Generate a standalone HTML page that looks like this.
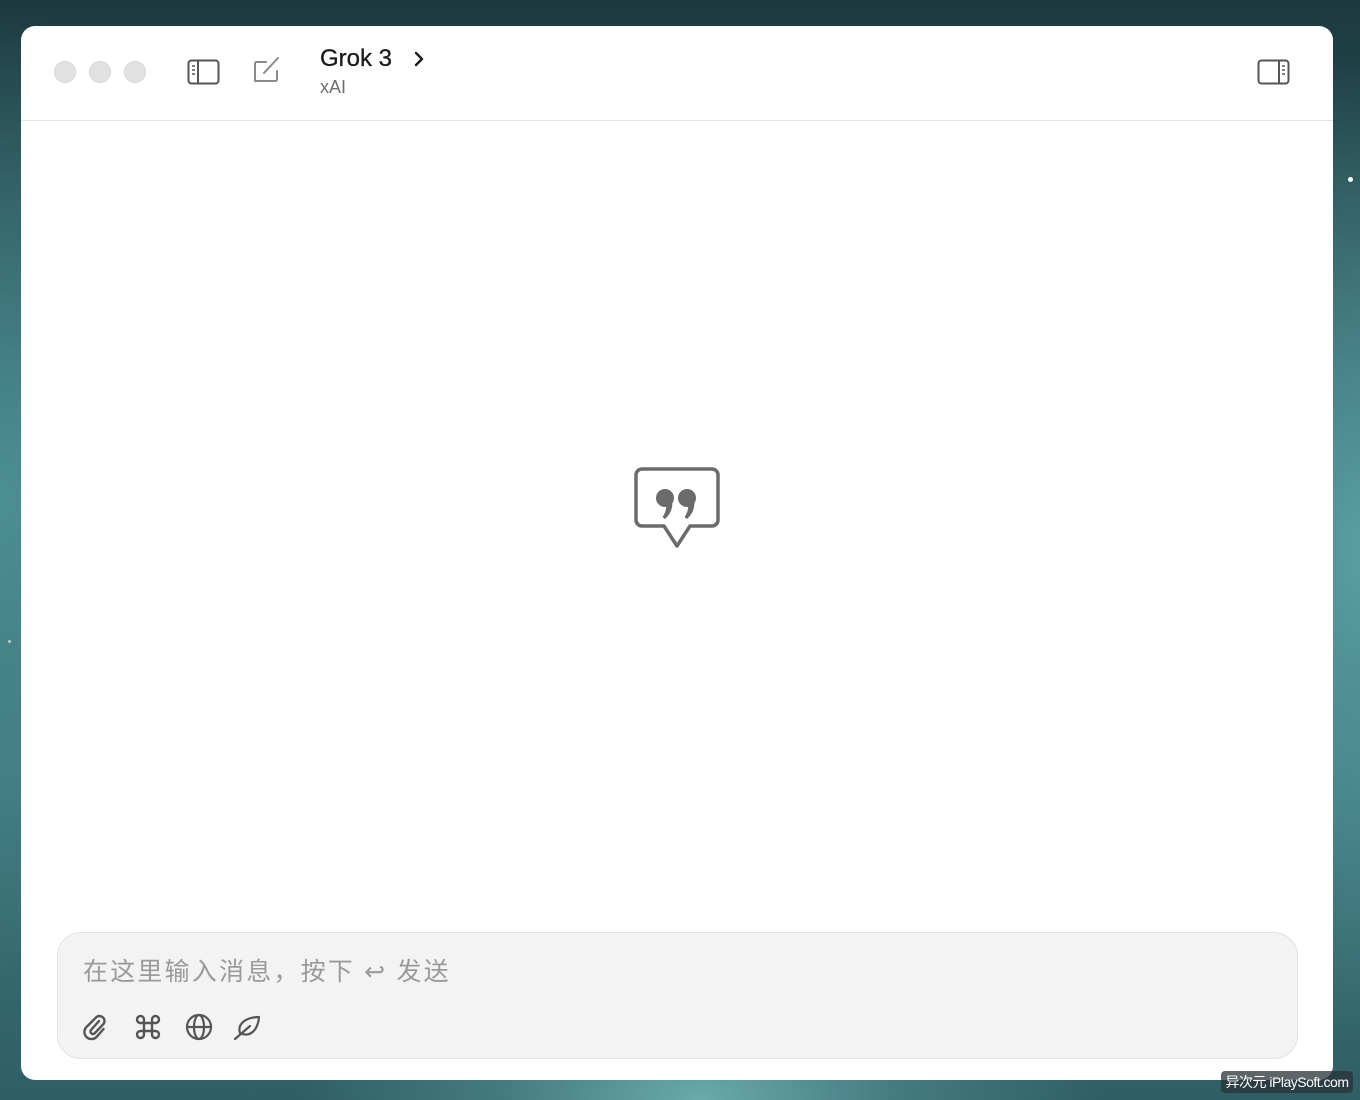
<!DOCTYPE html>
<html><head><meta charset="utf-8"><style>
*{margin:0;padding:0;box-sizing:border-box}
html,body{width:1360px;height:1100px;overflow:hidden}
body{background:
radial-gradient(ellipse 500px 300px at 700px 1100px,#6aa9ac 0%,rgba(80,140,145,0.6) 40%,transparent 80%),
radial-gradient(ellipse 400px 700px at 0px 500px,#4d8f95 0%,transparent 70%),
radial-gradient(ellipse 300px 700px at 1360px 550px,#5a9ea3 0%,transparent 70%),
linear-gradient(180deg,#1d3a40 0%,#2d5d63 40%,#3b7378 70%,#2f5f66 100%);
font-family:"Liberation Sans","Noto Sans CJK SC",sans-serif;position:relative}
.win{position:absolute;left:21px;top:26px;width:1312px;height:1054px;background:#fff;border-radius:14px;overflow:hidden}
.hdr{position:absolute;left:0;top:0;width:100%;height:95px;border-bottom:1.5px solid #e3e3e3}
.dot{position:absolute;top:35px;width:22px;height:22px;border-radius:50%;background:#e2e2e2;border:1px solid #d6d6d6}
.title{position:absolute;left:299px;top:19px;font-size:24px;font-weight:500;color:#1a1a1a;-webkit-text-stroke:0.3px #1a1a1a}
.sub{position:absolute;left:299px;top:51px;font-size:18px;color:#6e6e6e}
.inp{position:absolute;left:36px;top:906px;width:1241px;height:127px;background:#f3f3f3;border:1.5px solid #e2e2e2;border-radius:24px}
.ph{position:absolute;left:25px;top:19px;font-size:25px;color:#9a9a9a;letter-spacing:2.2px}
.wm{position:absolute;left:1221px;top:1071px;width:132px;height:22px;background:rgba(40,50,55,0.75);border-radius:4px;color:#fff;font-size:14px;line-height:22px;text-align:center;letter-spacing:-0.5px}
.star{position:absolute;width:5px;height:5px;border-radius:50%;background:#fff}
</style></head><body>
<div class="star" style="left:1348px;top:177px"></div>
<div class="star" style="left:8px;top:640px;width:3px;height:3px;opacity:.6"></div>
<div class="win">
<div class="hdr">
<div class="dot" style="left:33px"></div>
<div class="dot" style="left:68px"></div>
<div class="dot" style="left:103px"></div>
<svg style="position:absolute;left:166px;top:33px" width="34" height="26" viewBox="0 0 34 26" fill="none" stroke="#555" stroke-width="2"><rect x="1.5" y="1.5" width="30" height="23" rx="3"/><line x1="11" y1="2" x2="11" y2="24"/><line x1="5" y1="7" x2="8" y2="7" stroke-width="1.5"/><line x1="5" y1="11" x2="8" y2="11" stroke-width="1.5"/><line x1="5" y1="15" x2="8" y2="15" stroke-width="1.5"/></svg>
<svg style="position:absolute;left:231px;top:29px" width="30" height="30" viewBox="0 0 30 30" fill="none" stroke="#8a8a8a" stroke-width="2" stroke-linecap="round" stroke-linejoin="round"><path d="M14 7H4.5a1.5 1.5 0 0 0-1.5 1.5V26h20.5a1.5 1.5 0 0 0 1.5-1.5V16"/><path d="M12 18L26 3"/></svg>
<div class="title">Grok 3</div>
<svg style="position:absolute;left:391px;top:24px" width="14" height="18" viewBox="0 0 14 18" fill="none" stroke="#1a1a1a" stroke-width="2.4" stroke-linecap="round" stroke-linejoin="round"><path d="M4 3l6 6-6 6"/></svg>
<div class="sub">xAI</div>
<svg style="position:absolute;left:1236px;top:33px" width="34" height="26" viewBox="0 0 34 26" fill="none" stroke="#555" stroke-width="2"><rect x="1.5" y="1.5" width="30" height="23" rx="3"/><line x1="22" y1="2" x2="22" y2="24"/><line x1="25" y1="7" x2="28" y2="7" stroke-width="1.5"/><line x1="25" y1="11" x2="28" y2="11" stroke-width="1.5"/><line x1="25" y1="15" x2="28" y2="15" stroke-width="1.5"/></svg>
</div>
<svg style="position:absolute;left:613px;top:441px" width="86" height="82" viewBox="0 0 86 82" fill="none" stroke="#6b6b6b" stroke-width="3.5" stroke-linejoin="round"><path d="M8 2H78a6 6 0 0 1 6 6V53a6 6 0 0 1-6 6H56L43 79 30 59H8a6 6 0 0 1-6-6V8a6 6 0 0 1 6-6Z"/><g fill="#6b6b6b" stroke="none"><circle cx="31" cy="31" r="9"/><path d="M38 32Q40 44 31 52L28.5 50Q33 44 32 36Z"/><circle cx="53" cy="31" r="9"/><path d="M60 32Q62 44 53 52L50.5 50Q55 44 54 36Z"/></g></svg>
<div class="inp">
<div class="ph">在这里输入消息，按下 ↩ 发送</div>
<svg style="position:absolute;left:22px;top:78px" width="30" height="30" viewBox="0 0 30 30" fill="none" stroke="#555" stroke-width="2.4" stroke-linecap="round"><path d="M19 10L11 19a2.5 2.5 0 0 0 3.5 3.5L23.5 13a5 5 0 0 0-7-7L6.5 16a7 7 0 0 0 10 10l7-8"/></svg>
<svg style="position:absolute;left:76px;top:80px" width="28" height="28" viewBox="0 0 28 28" fill="none" stroke="#555" stroke-width="2.4"><path d="M10 10V6.5A3.5 3.5 0 1 0 6.5 10H21.5A3.5 3.5 0 1 0 18 6.5V21.5A3.5 3.5 0 1 0 21.5 18H6.5A3.5 3.5 0 1 0 10 21.5Z"/></svg>
<svg style="position:absolute;left:126px;top:79px" width="30" height="30" viewBox="0 0 30 30" fill="none" stroke="#555" stroke-width="2.2"><circle cx="15" cy="15" r="12"/><ellipse cx="15" cy="15" rx="5" ry="12"/><line x1="3" y1="15" x2="27" y2="15"/></svg>
<svg style="position:absolute;left:174px;top:79px" width="30" height="30" viewBox="0 0 30 30" fill="none" stroke="#555" stroke-width="2.2" stroke-linecap="round" stroke-linejoin="round"><path d="M8 21C5 12 14 5 27 5 26 18 18 26 8 21Z"/><path d="M3 27L18 14"/></svg>
</div>
</div>
<div class="wm">异次元 iPlaySoft.com</div>
</body></html>
